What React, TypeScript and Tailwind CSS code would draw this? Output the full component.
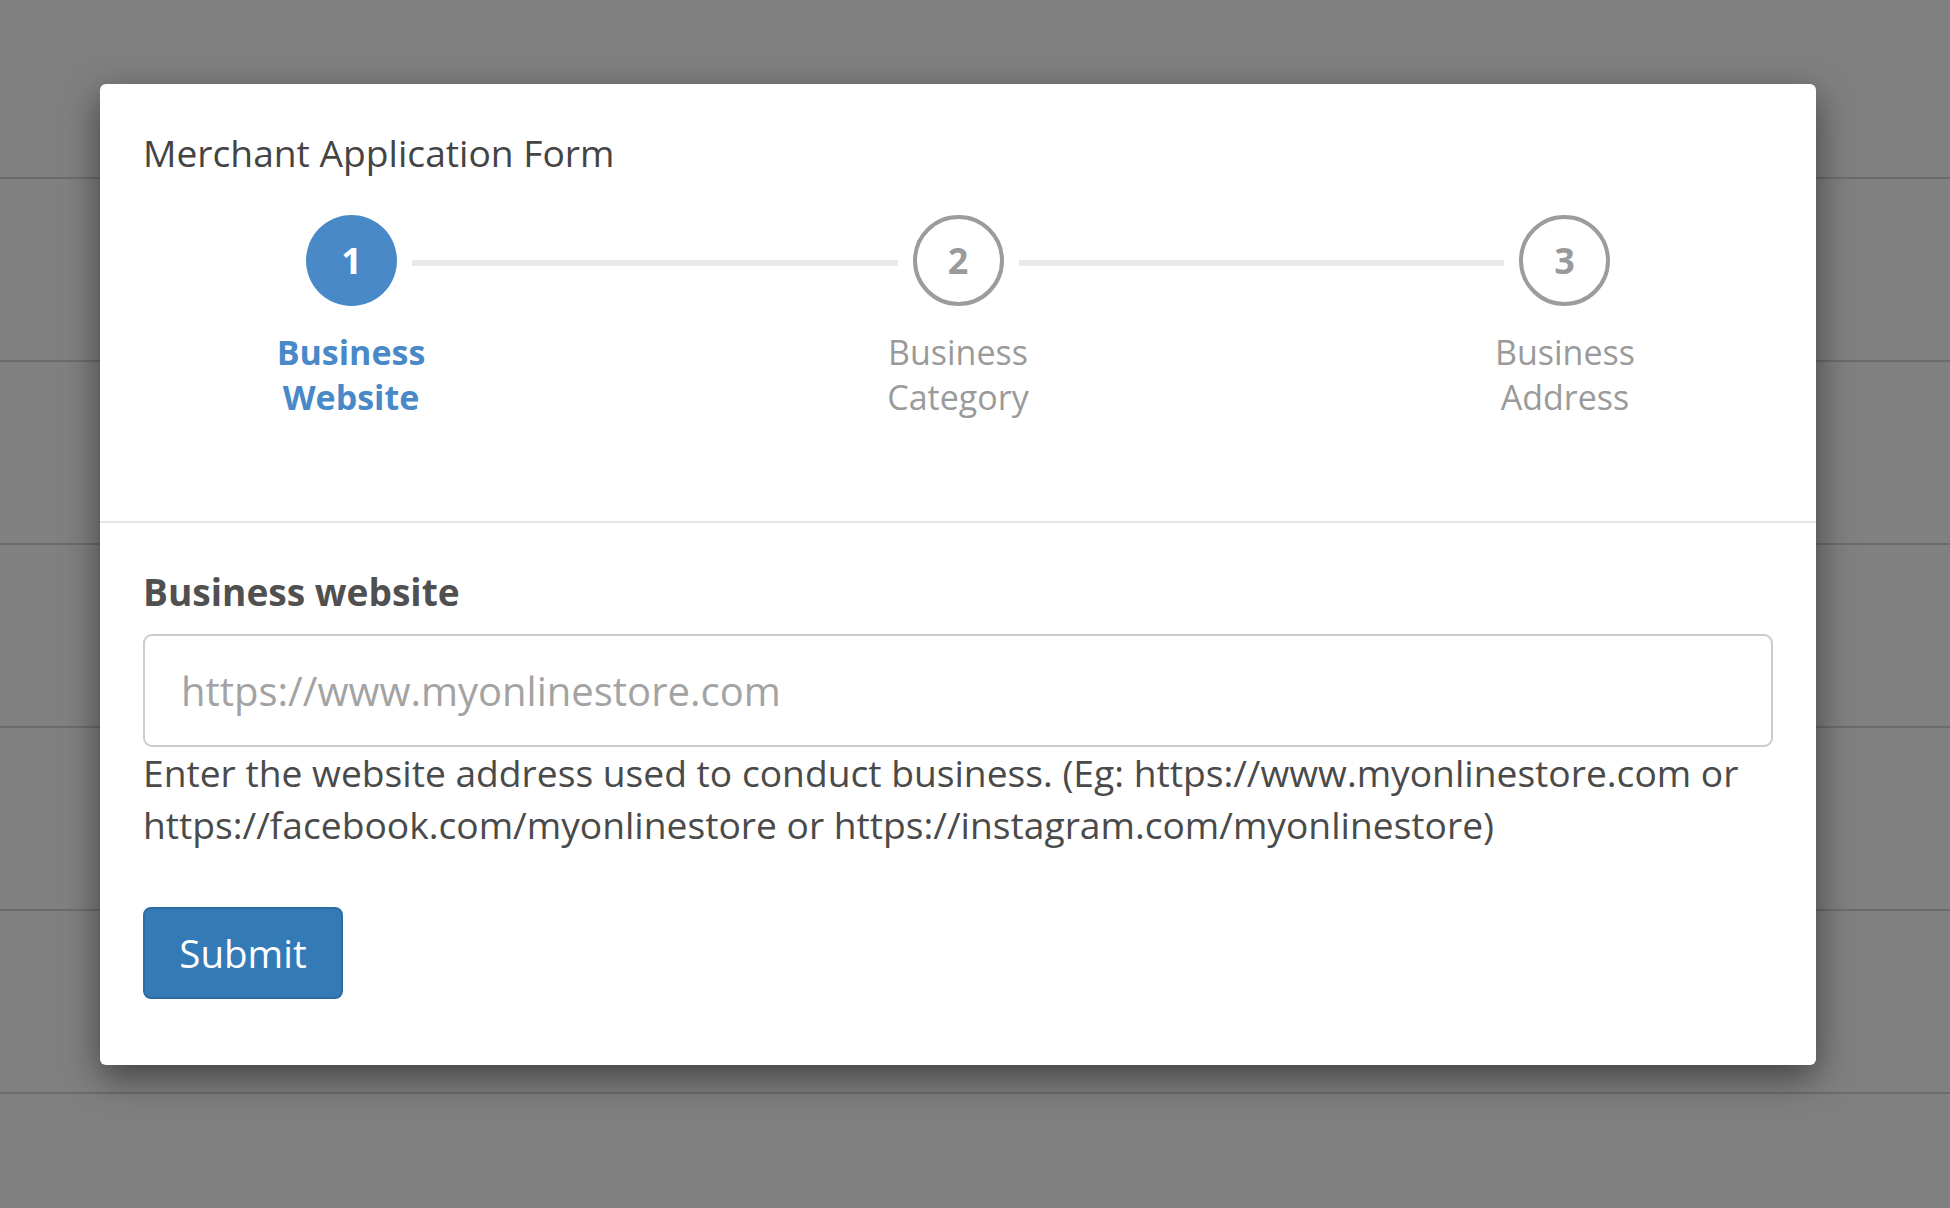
import React from "react";

const rows = [179, 183, 183, 183, 183, 183];

function StepCircle({ n, active }: { n: number; active?: boolean }) {
  return active ? (
    <div className="w-[91px] h-[91px] shrink-0 rounded-full bg-[#4a89c8] flex items-center justify-center text-white font-bold text-[36px] leading-none">
      {n}
    </div>
  ) : (
    <div className="w-[91px] h-[91px] shrink-0 rounded-full border-[4.5px] border-[#9c9c9c] bg-white flex items-center justify-center text-[#9a9a9a] font-bold text-[36px] leading-none">
      {n}
    </div>
  );
}

export default function App() {
  return (
    <div
      className="relative w-[1950px] h-[1208px] overflow-hidden bg-[#808080]"
      style={{ fontFamily: '"Open Sans", "Noto Sans", sans-serif' }}
    >
      {/* background table rows behind backdrop */}
      <div className="flex flex-col">
        {rows.map((h, i) => (
          <div
            key={i}
            className={`border-b-2 border-[#6c6c6c] ${i === 0 ? "h-[179px]" : "h-[183px]"}`}
          />
        ))}
      </div>

      {/* modal */}
      <div className="absolute left-[100px] top-[84px] w-[1716px] bg-white rounded-[6px] shadow-[0_12px_36px_rgba(0,0,0,0.5)]">
        {/* header */}
        <div className="px-[43px] pt-[43px] pb-[101px] border-b-2 border-[#e5e5e5]">
          <div className="text-[37.2px] leading-[51px] text-[#444444]">Merchant Application Form</div>

          <div className="mt-[37px] flex items-start px-[163px]">
            <StepCircle n={1} active />
            <div className="flex-1 mx-[15px] mt-[45px] h-[6px] bg-[#e9e9e9]" />
            <StepCircle n={2} />
            <div className="flex-1 mx-[15px] mt-[45px] h-[6px] bg-[#e9e9e9]" />
            <StepCircle n={3} />
          </div>

          <div className="mt-[24px] flex justify-between">
            <div className="w-[416px] text-center text-[34px] leading-[45px] font-bold text-[#4a89c8]">
              Business
              <br />
              Website
            </div>
            <div className="w-[416px] text-center text-[34px] leading-[45px] text-[#9a9a9a]">
              Business
              <br />
              Category
            </div>
            <div className="w-[416px] text-center text-[34px] leading-[45px] text-[#9a9a9a]">
              Business
              <br />
              Address
            </div>
          </div>
        </div>

        {/* body */}
        <div className="px-[43px] pt-[42px] pb-[66px]">
          <div className="text-[37.1px] leading-[54px] font-bold text-[#505050]">Business website</div>
          <div className="mt-[15px] h-[113px] rounded-[9px] border-2 border-[#cccccc] flex items-center pl-[36px]">
            <span className="text-[40px] text-[#a3a3a3] leading-none">https://www.myonlinestore.com</span>
          </div>
          <div className="text-[37.2px] leading-[52px] text-[#4a4a4a]">
            Enter the website address used to conduct business. (Eg: https://www.myonlinestore.com or
            <br />
            https://facebook.com/myonlinestore or https://instagram.com/myonlinestore)
          </div>
          <button className="mt-[56px] w-[200px] h-[92px] rounded-[8px] bg-[#337ab7] border-2 border-[#2e6da4] text-white text-[38.5px] leading-none flex items-center justify-center">
            Submit
          </button>
        </div>
      </div>
    </div>
  );
}
